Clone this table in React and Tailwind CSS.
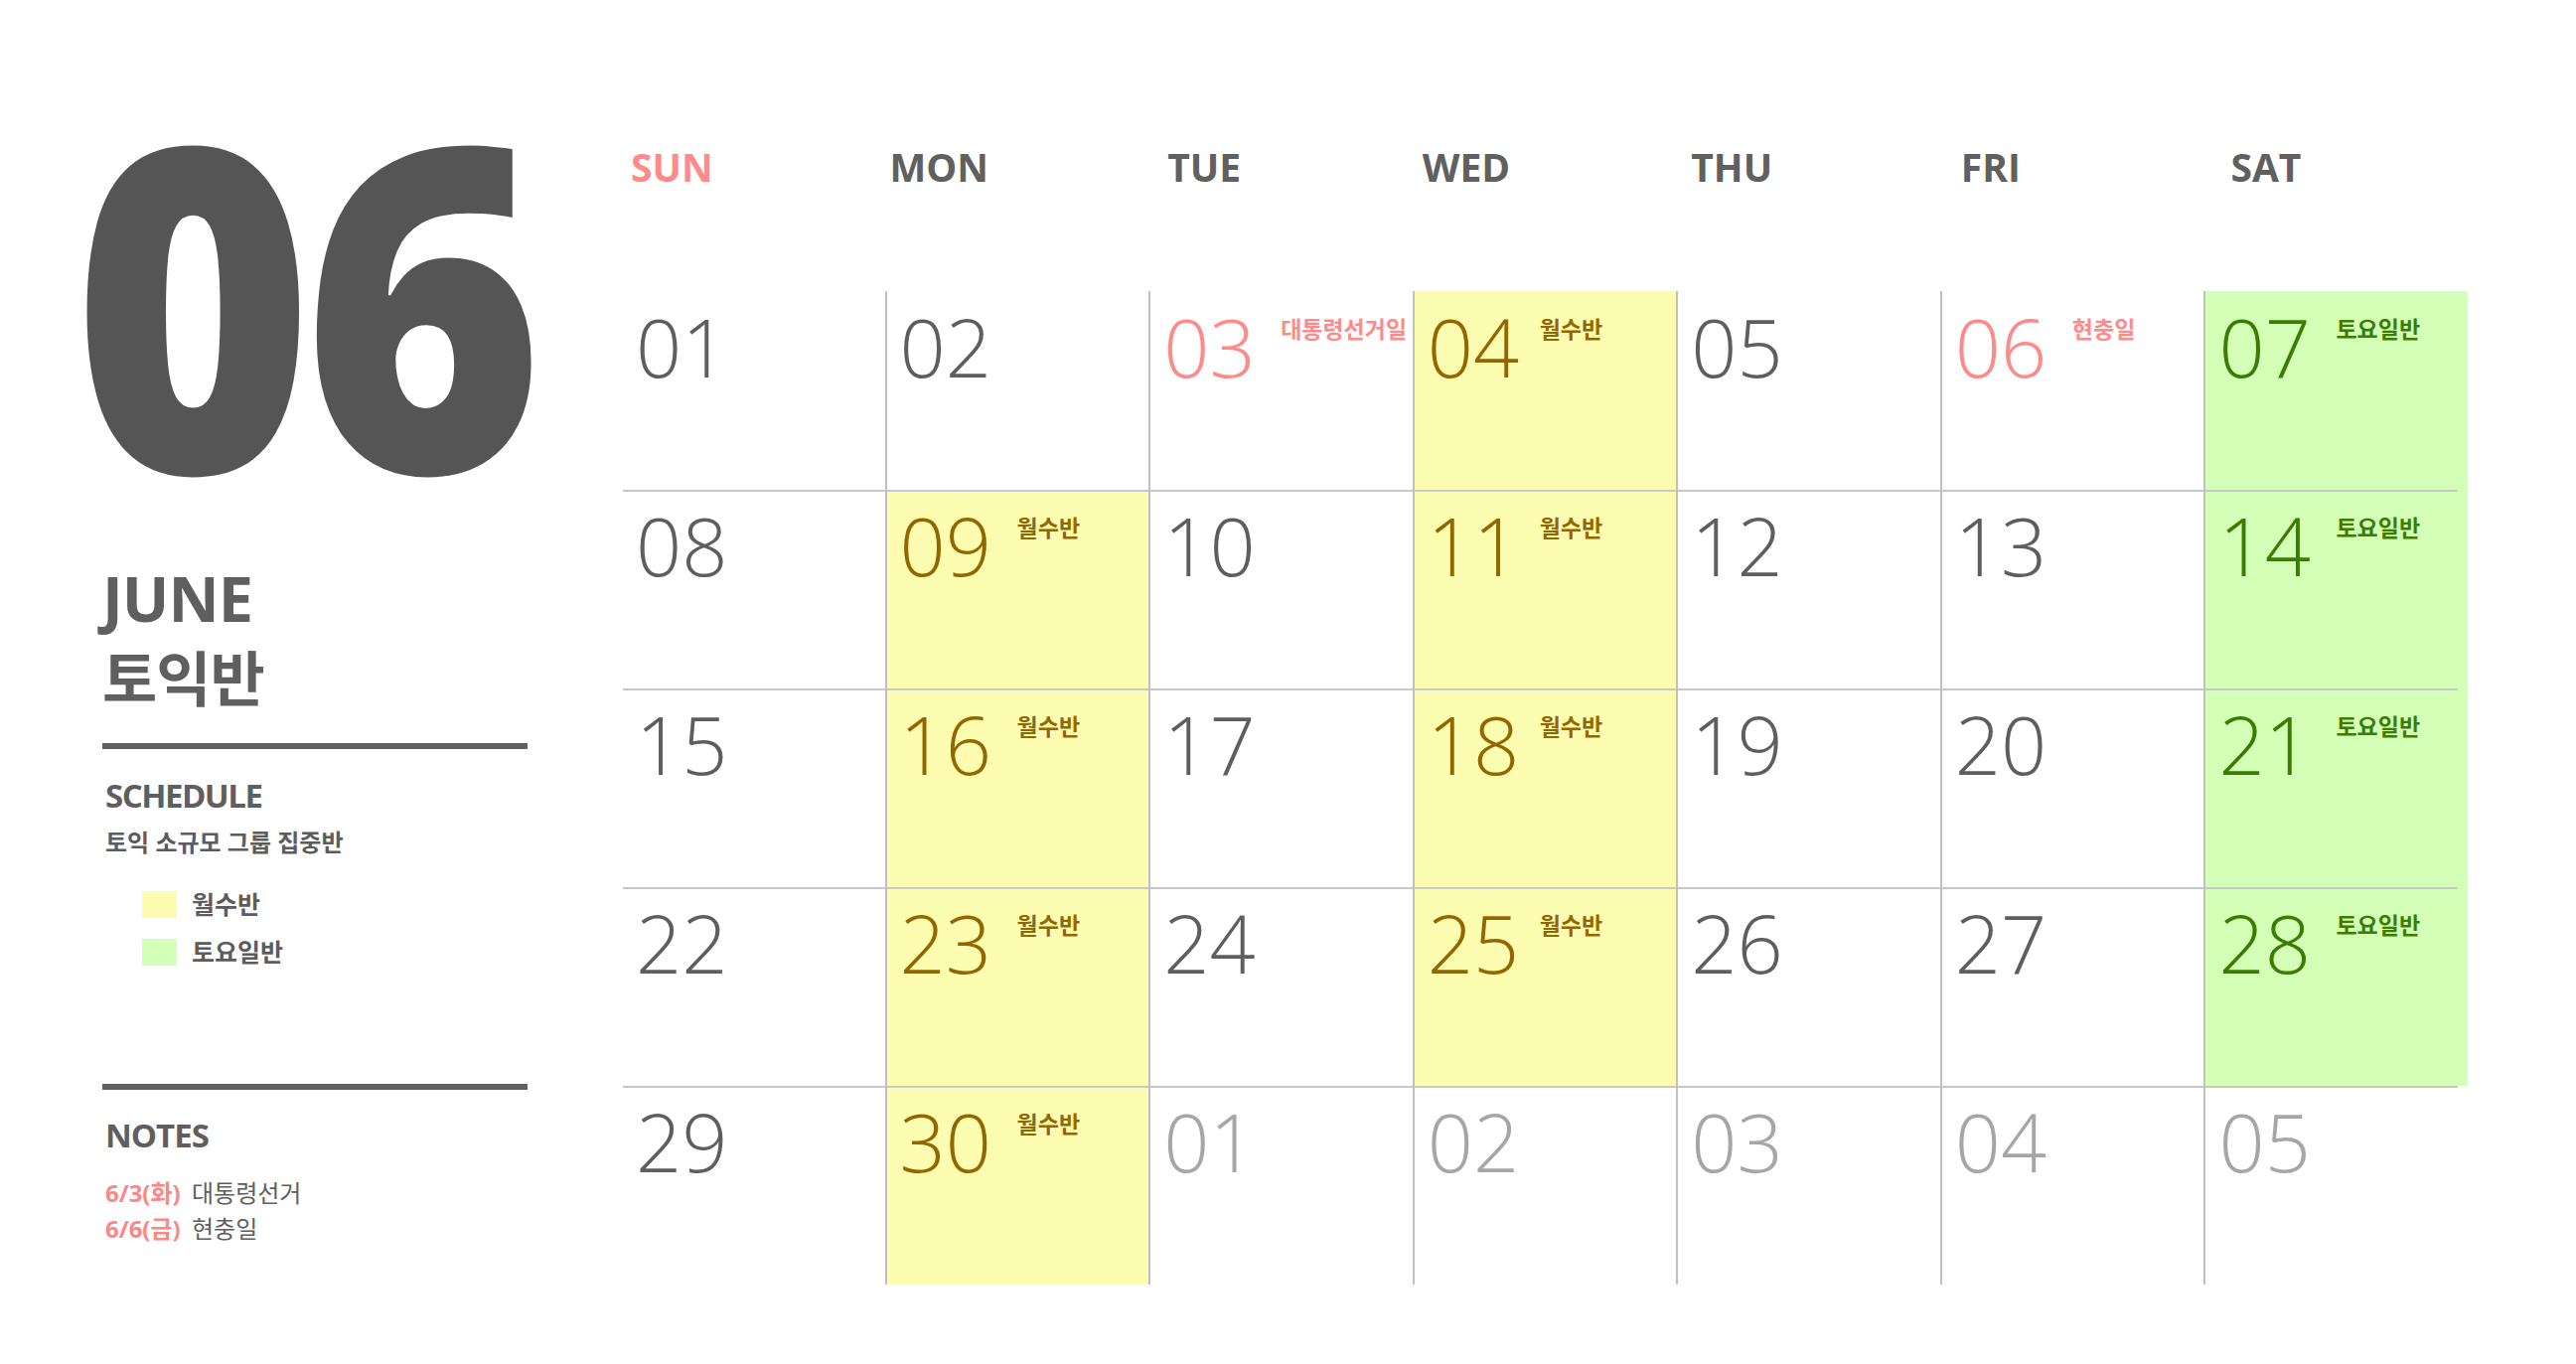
import React from 'react';

const DAYS = ['SUN', 'MON', 'TUE', 'WED', 'THU', 'FRI', 'SAT'];
const HEAD_PAD = ['pl-[10px]', 'pl-[5px]', 'pl-[19px]', 'pl-[10px]', 'pl-[15px]', 'pl-[21px]', 'pl-[27px]'];
const NUM_W = ['w-[118px]', 'w-[118px]', 'w-[118px]', 'w-[113px]', 'w-[118px]', 'w-[118px]', 'w-[118px]'];

// t: red = holiday, mon = 월수반, sat = 토요일반, next = next month
const WEEKS = [
    [{ d: '01' }, { d: '02' }, { d: '03', t: 'red', label: '대통령선거일' }, { d: '04', t: 'mon', label: '월수반' }, { d: '05' }, { d: '06', t: 'red', label: '현충일' }, { d: '07', t: 'sat', label: '토요일반' }],
    [{ d: '08' }, { d: '09', t: 'mon', label: '월수반' }, { d: '10' }, { d: '11', t: 'mon', label: '월수반' }, { d: '12' }, { d: '13' }, { d: '14', t: 'sat', label: '토요일반' }],
    [{ d: '15' }, { d: '16', t: 'mon', label: '월수반' }, { d: '17' }, { d: '18', t: 'mon', label: '월수반' }, { d: '19' }, { d: '20' }, { d: '21', t: 'sat', label: '토요일반' }],
    [{ d: '22' }, { d: '23', t: 'mon', label: '월수반' }, { d: '24' }, { d: '25', t: 'mon', label: '월수반' }, { d: '26' }, { d: '27' }, { d: '28', t: 'sat', label: '토요일반' }],
    [{ d: '29' }, { d: '30', t: 'mon', label: '월수반' }, { d: '01', t: 'next' }, { d: '02', t: 'next' }, { d: '03', t: 'next' }, { d: '04', t: 'next' }, { d: '05', t: 'next' }],
];

const BG = { mon: 'bg-[#fdfdb1]', sat: 'bg-[#d3ffb7]' };
const TEXT = {
    red: 'text-[#ff8a8a]',
    mon: 'text-[#946600]',
    sat: 'text-[#3b7d00]',
    next: 'text-[#a6a6a6]',
};

const DayCell = ({ cell, col, row }) => {
    const bg = BG[cell.t] || 'bg-white';
    const color = TEXT[cell.t] || 'text-[#5e5e5e]';
    return (
        <div className={`h-[200px] border-l-2 ${col === 0 ? 'border-transparent' : 'border-[#c0c0c0]'} ${bg}`}>
            {/* row separator */}
            <div className={`h-[2px] ${row === 0 ? 'bg-transparent' : 'bg-[#c8c8c8]'} ${col === 6 ? 'w-[254px]' : 'w-full'}`} />
            <div className="flex items-start pl-[13px] pt-[13px]">
                <div className={`${NUM_W[col]} shrink-0 text-[81px] font-light leading-none ${color}`}>{cell.d}</div>
                {cell.label && (
                    <div className={`mt-[11px] whitespace-nowrap font-['Noto_Sans_CJK_KR',sans-serif] text-[23px] font-bold leading-none ${color}`}>
                        {cell.label}
                    </div>
                )}
            </div>
        </div>
    );
};

const Legend = ({ swatch, label }) => (
    <div className="flex items-center">
        <div className={`h-[27px] w-[35px] ${swatch}`} />
        <span className="ml-[15px] text-[25px] font-bold leading-none text-[#5c5c5c]">{label}</span>
    </div>
);

export default function App() {
    return (
        <div className="flex h-[1373px] w-[2593px] bg-white font-['Open_Sans','Noto_Sans_CJK_KR',sans-serif]">

            {/* Left panel */}
            <aside className="w-[625px] shrink-0">
                <div className="ml-[73px] h-[528px] origin-left scale-x-[0.91] pt-[72px] text-[455px] font-extrabold leading-[456px] tracking-[-12px] text-[#555555]">06</div>

                <div className="ml-[103px] w-[428px]">
                    <div className="mt-[42px] text-[63px] font-bold leading-none tracking-[-1px] text-[#5f5f5f]">JUNE</div>
                    <div className="mt-[20px] text-[60px] font-bold leading-none tracking-[-1px] text-[#5f5f5f]">토익반</div>

                    <div className="mt-[35px] h-[6px] bg-[#616161]" />

                    <div className="mt-[30px] pl-[3px] text-[33px] font-bold leading-none tracking-[-1.5px] text-[#5f5f5f]">SCHEDULE</div>
                    <div className="mt-[19px] pl-[3px] text-[24px] font-bold leading-none text-[#5c5c5c]">토익 소규모 그룹 집중반</div>

                    <div className="ml-[40px] mt-[37px] flex flex-col gap-[21px]">
                        <Legend swatch="bg-[#fdfdb1]" label="월수반" />
                        <Legend swatch="bg-[#d3ffb7]" label="토요일반" />
                    </div>

                    <div className="mt-[119px] h-[6px] bg-[#616161]" />

                    <div className="mt-[29px] pl-[3px] text-[33px] font-bold leading-none tracking-[-1px] text-[#5f5f5f]">NOTES</div>
                    <div className="mt-[30px] flex flex-col gap-[12px] pl-[3px] text-[24px] leading-none">
                        <div className="flex">
                            <span className="w-[87px] font-bold text-[#ff8686]">6/3(화)</span>
                            <span className="text-[#5e5e5e]">대통령선거</span>
                        </div>
                        <div className="flex">
                            <span className="w-[87px] font-bold text-[#ff8686]">6/6(금)</span>
                            <span className="text-[#5e5e5e]">현충일</span>
                        </div>
                    </div>
                </div>
            </aside>

            {/* Calendar */}
            <main className="w-[1859px] shrink-0">
                <div className="grid h-[293px] grid-cols-7 pt-[148px]">
                    {DAYS.map((d, i) => (
                        <div
                            key={d}
                            className={`${HEAD_PAD[i]} text-[39px] font-bold leading-none ${i === 0 ? 'text-[#ff8a8a]' : 'text-[#606060]'}`}
                        >
                            {d}
                        </div>
                    ))}
                </div>

                <div className="grid grid-cols-7">
                    {WEEKS.map((week, r) =>
                        week.map((cell, c) => <DayCell key={`${r}-${c}`} cell={cell} col={c} row={r} />)
                    )}
                </div>
            </main>
        </div>
    );
}
